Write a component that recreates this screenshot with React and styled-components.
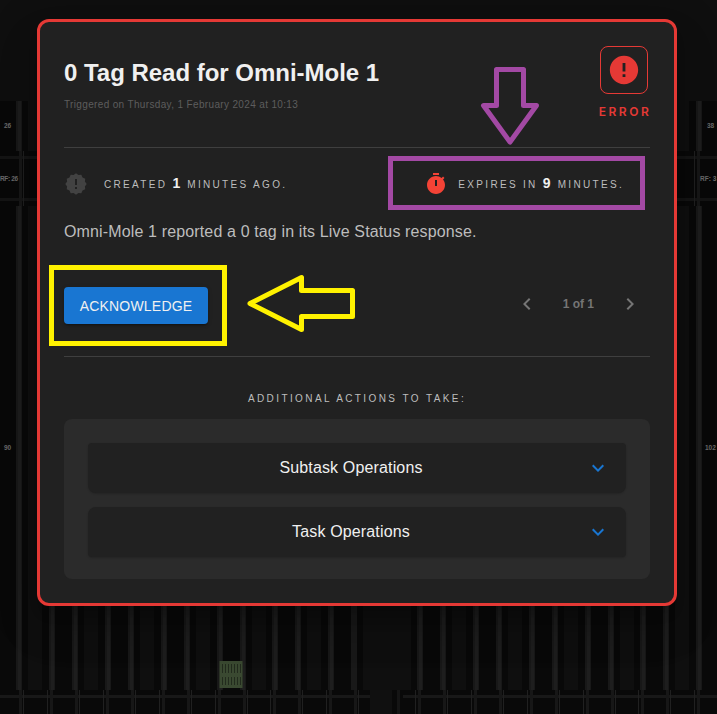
import React from "react";
import styled, { createGlobalStyle } from "styled-components";

const GlobalStyle = createGlobalStyle`
  * { box-sizing: border-box; }
  body { margin: 0; background: #0f0f0f; overflow: hidden; }
`;

const Page = styled.main`
  position: relative;
  width: 717px;
  height: 714px;
  padding: 19px 0 0 37px;
  overflow: hidden;
  background: #0f0f0f;
  font-family: "Liberation Sans", Arial, sans-serif;
`;

const FloorMap = styled.svg`
  position: absolute;
  inset: 0;
`;

const Annotations = styled.svg`
  position: absolute;
  inset: 0;
  pointer-events: none;
`;

const Card = styled.section`
  position: relative;
  width: 640px;
  height: 587px;
  padding: 24px;
  border: 3px solid #e53935;
  border-radius: 12px;
  background: #212121;
  box-shadow: 0 11px 15px -7px rgba(0, 0, 0, 0.2), 0 24px 38px 3px rgba(0, 0, 0, 0.14),
    0 9px 46px 8px rgba(0, 0, 0, 0.12);
`;

const Header = styled.header`
  display: flex;
  justify-content: space-between;
  height: 102px;
  border-bottom: 1px solid #3f3f3f;
`;

const Title = styled.h1`
  margin: 12px 0 0;
  font-size: 24px;
  line-height: 30px;
  font-weight: 700;
  letter-spacing: -0.02px;
  color: #f0f0f0;
`;

const Triggered = styled.p`
  margin: 10px 0 0;
  font-size: 10px;
  line-height: 14px;
  letter-spacing: 0.35px;
  color: #5d5d5d;
`;

const Severity = styled.div`
  display: flex;
  flex-direction: column;
  align-items: center;
  width: 52px;
  color: #e53935;
`;

const SeverityBox = styled.div`
  display: grid;
  place-items: center;
  width: 48px;
  height: 48px;
  border: 1px solid #e53935;
  border-radius: 8px;
`;

const SeverityLabel = styled.span`
  margin: 9px 0 0 2px;
  font-family: Inter, sans-serif;
  font-size: 12px;
  line-height: 18px;
  font-weight: 600;
  letter-spacing: 2.5px;
`;

const Timing = styled.div`
  display: flex;
  justify-content: space-between;
  height: 72px;
  padding: 0 26px 0 0;
`;

const TimingItem = styled.div`
  display: flex;
  align-items: center;
  height: 72px;
  gap: ${(p) => p.$gap}px;
  font-size: 10px;
  letter-spacing: 2.32px;
  white-space: pre;
  color: #bdbdbd;

  span { margin-top: -2px; }

  b {
    font-size: 14px;
    letter-spacing: 2px;
    color: #f0f0f0;
  }
`;

const Message = styled.p`
  margin: 0;
  font-size: 16px;
  line-height: 24px;
  letter-spacing: 0.14px;
  color: #bdbdbd;
`;

const ActionBar = styled.div`
  display: flex;
  align-items: center;
  justify-content: space-between;
  height: 113px;
  padding-bottom: 10px;
  border-bottom: 1px solid #3f3f3f;
`;

const Acknowledge = styled.button`
  width: 144px;
  height: 37px;
  margin-top: 20px;
  padding: 2px 0 0;
  border: 0;
  border-radius: 4px;
  background: #1976d2;
  color: #f0f0f0;
  font: 14px "Liberation Sans", Arial, sans-serif;
  letter-spacing: 0.2px;
  box-shadow: 0 3px 1px -2px rgba(0, 0, 0, 0.2), 0 2px 2px rgba(0, 0, 0, 0.14),
    0 1px 5px rgba(0, 0, 0, 0.12);
`;

const Pager = styled.nav`
  display: flex;
  align-items: center;
  margin-top: 17px;
  margin-right: 8px;
  gap: 24px;
  font-size: 12px;
  font-weight: 700;
  color: #757575;
`;

const ActionsLabel = styled.h2`
  margin: 34px 0 12px;
  font-size: 10px;
  line-height: 16px;
  font-weight: 400;
  letter-spacing: 2.4px;
  text-align: center;
  color: #bdbdbd;
`;

const ActionsPanel = styled.div`
  display: flex;
  flex-direction: column;
  gap: 14px;
  height: 160px;
  padding: 24px 24px 22px;
  border-radius: 8px;
  background: #2b2b2b;
`;

const Operation = styled.button`
  display: flex;
  align-items: center;
  justify-content: center;
  height: 50px;
  padding: 0 16px 0 28px;
  border: 0;
  border-radius: ${(p) => (p.$last ? "8px 8px 4px 4px" : "4px 4px 8px 8px")};
  background: #212121;
  color: #f0f0f0;
  font: 16px "Liberation Sans", Arial, sans-serif;
  letter-spacing: 0.15px;
  box-shadow: 0 1px 2px rgba(0, 0, 0, 0.18);

  span { flex: 1; text-align: center; }
  svg { margin-top: -1px; }
`;

const BADGE_OUTLINE = Array.from({ length: 24 }, (_, i) => {
  const radius = i % 2 ? 9.2 : 10.7;
  const angle = (i * Math.PI) / 12;
  return `${(12 + radius * Math.sin(angle)).toFixed(2)} ${(12 - radius * Math.cos(angle)).toFixed(2)}`;
}).join("L");

const ICONS = {
  error:
    "M12 2C6.48 2 2 6.48 2 12s4.48 10 10 10 10-4.48 10-10S17.52 2 12 2zm1 15h-2v-2h2v2zm0-4h-2V7h2v6z",
  created: `M${BADGE_OUTLINE}ZM13 7h-2v6h2V7zM13 15h-2v2h2v-2z`,
  timer:
    "M15 1H9v2h6V1zm-4 13h2V8h-2v6zm8.03-6.61l1.42-1.42c-.43-.51-.9-.99-1.41-1.41l-1.42 1.42C16.07 4.74 14.12 4 12 4c-4.97 0-9 4.03-9 9s4.02 9 9 9 9-4.03 9-9c0-2.12-.74-4.07-1.97-5.61z",
  left: "M15.41 7.41L14 6l-6 6 6 6 1.41-1.41L10.83 12z",
  right: "M10 6L8.59 7.41 13.17 12l-4.58 4.59L10 18l6-6z",
  down: "M16.59 8.59L12 13.17 7.41 8.59 6 10l6 6 6-6z",
};

function Icon({ name, size, color }) {
  return (
    <svg width={size} height={size} viewBox="0 0 24 24" fill={color} fillRule="evenodd" aria-hidden="true">
      <path d={ICONS[name]} />
    </svg>
  );
}

const RACKS = [-7, 49, 105, 161, 217, 272, 328, 417, 473, 529, 585, 640, 696];

function Floor() {
  return (
    <FloorMap width="717" height="714" viewBox="0 0 717 714">
      {[[101, 50], [206, 484]].map(([y, h]) => (
        <g key={y}>
          <rect y={y} width="363" height={h} fill="#090909" />
          <rect x="411" y={y} width="306" height={h} fill="#090909" />
          {RACKS.map((x) => (
            <g key={x}>
              <rect x={x} y={y} width="6" height={h} fill="#181818" />
              <rect x={x + 2} y={y} width="3" height={h} fill="#1e1e1e" />
              {x !== 328 && (
                <>
                  <rect x={x + 23} y={y} width="6" height={h} fill="#181818" />
                  <rect x={x + 25} y={y} width="3" height={h} fill="#1e1e1e" />
                  <rect x={x + 35} y={y} width="14" height={h} fill="#0f0f0f" />
                </>
              )}
              {x === 328 && <rect x="351" y={y} width="6" height={h} fill="#191919" />}
            </g>
          ))}
        </g>
      ))}
      <rect y="151" width="717" height="55" fill="#090909" />
      <rect y="690" width="717" height="24" fill="#090909" />
      <rect x="370" y="690" width="22" height="24" fill="#101010" />
      {[157, 199].map((y) => (
        <rect key={y} y={y - 1} width="717" height="3" fill="#151515" />
      ))}
      <path d="M0 696.5H370M403 696.5H717" stroke="#181818" strokeWidth="3" />
      {RACKS.map((x) => (
        <g key={x} fill="#171717">
          {[[151, 55], [690, 24]].map(([y, h]) => (
            <g key={y}>
              <rect x={x - 2} y={y} width="1" height={h} fill="#202020" />
              <rect x={x + 1} y={y} width="3" height={h} />
              <rect x={x + 26} y={y} width="3" height={h} />
              <rect x={x + 30} y={y} width="1" height={h} fill="#202020" />
            </g>
          ))}
        </g>
      ))}
      <rect x="397" y="690" width="3" height="24" fill="#151515" />
      <rect x="219.5" y="661" width="23" height="27" fill="#3a4931" />
      <path
        d="M222.5 664V673M225.5 664V673M228.5 664V673M231.5 664V673M234.5 664V673M237.5 664V673M240.5 664V673M222.5 677V685M225.5 677V685M228.5 677V685M231.5 677V685M234.5 677V685M237.5 677V685M240.5 677V685"
        stroke="#222b1d"
      />
      <g fill="#696969" fontSize="6.5" fontWeight="700" fontFamily="Liberation Sans, sans-serif">
        <text x="4" y="128">26</text>
        <text x="0" y="180.5" textLength="18">RF: 26</text>
        <text x="4" y="450">90</text>
        <text x="707" y="128">38</text>
        <text x="700" y="180.5">RF: 3</text>
        <text x="705" y="450">102</text>
      </g>
    </FloorMap>
  );
}

export default function App() {
  return (
    <>
      <GlobalStyle />
      <Page>
        <Floor />
        <Card>
          <Header>
            <div>
              <Title>0 Tag Read for Omni-Mole 1</Title>
              <Triggered>Triggered on Thursday, 1 February 2024 at 10:13</Triggered>
            </div>
            <Severity>
              <SeverityBox>
                <Icon name="error" size={34} color="#e53935" />
              </SeverityBox>
              <SeverityLabel>ERROR</SeverityLabel>
            </Severity>
          </Header>
          <Timing>
            <TimingItem $gap={16}>
              <Icon name="created" size={24} color="#424242" />
              <span>CREATED <b>1</b> MINUTES AGO.</span>
            </TimingItem>
            <TimingItem $gap={10}>
              <Icon name="timer" size={24} color="#f44336" />
              <span>EXPIRES IN <b>9</b> MINUTES.</span>
            </TimingItem>
          </Timing>
          <Message>Omni-Mole 1 reported a 0 tag in its Live Status response.</Message>
          <ActionBar>
            <Acknowledge>ACKNOWLEDGE</Acknowledge>
            <Pager>
              <Icon name="left" size={24} color="#757575" />
              <span>1 of 1</span>
              <Icon name="right" size={24} color="#757575" />
            </Pager>
          </ActionBar>
          <ActionsLabel>ADDITIONAL ACTIONS TO TAKE:</ActionsLabel>
          <ActionsPanel>
            <Operation>
              <span>Subtask Operations</span>
              <Icon name="down" size={24} color="#1976d2" />
            </Operation>
            <Operation $last>
              <span>Task Operations</span>
              <Icon name="down" size={24} color="#1976d2" />
            </Operation>
          </ActionsPanel>
        </Card>
        <Annotations width="717" height="714" viewBox="0 0 717 714" fill="none" strokeWidth="5">
          <g stroke="#a349a4">
            <rect x="390.5" y="158.5" width="252" height="49" />
            <path d="M496.5 69.5H523.5V105.5H536.5L510 142L483.5 105.5H496.5Z" strokeLinejoin="round" />
          </g>
          <g stroke="#fff200">
            <rect x="51.5" y="267.5" width="173" height="76" />
            <path d="M250 303.5L301.5 277.5V290.5H352.5V316.5H301.5V329.5Z" strokeLinejoin="round" />
          </g>
        </Annotations>
      </Page>
    </>
  );
}
